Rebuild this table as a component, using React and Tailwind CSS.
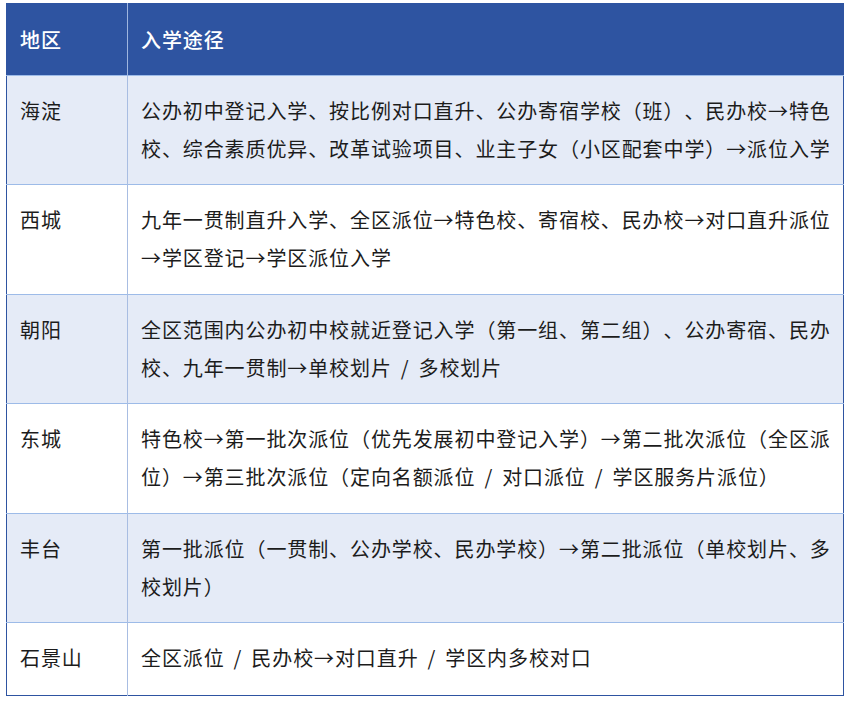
import React from "react";

const Sl = () => <span className="mx-[9px]">/</span>;
const rows = [
  { d: "海淀", lines: ["公办初中登记入学、按比例对口直升、公办寄宿学校（班）、民办校→特色", "校、综合素质优异、改革试验项目、业主子女（小区配套中学）→派位入学"] },
  { d: "西城", lines: ["九年一贯制直升入学、全区派位→特色校、寄宿校、民办校→对口直升派位", "→学区登记→学区派位入学"] },
  { d: "朝阳", lines: ["全区范围内公办初中校就近登记入学（第一组、第二组）、公办寄宿、民办", <>校、九年一贯制→单校划片<Sl />多校划片</>] },
  { d: "东城", lines: ["特色校→第一批次派位（优先发展初中登记入学）→第二批次派位（全区派", <>位）→第三批次派位（定向名额派位<Sl />对口派位<Sl />学区服务片派位）</>] },
  { d: "丰台", lines: ["第一批派位（一贯制、公办学校、民办学校）→第二批派位（单校划片、多", "校划片）"] },
  { d: "石景山", lines: [<>全区派位<Sl />民办校→对口直升<Sl />学区内多校对口</>] },
];

export default function App() {
  return (
    <div className="w-[850px] h-[702px] bg-white pt-[3px] pl-[6px]" style={{ fontFamily: '"Noto Sans CJK SC", "Noto Sans", sans-serif' }}>
      <table className="w-[838px] border-collapse border border-[#2e54a1] text-[20px] tracking-[0.9px] text-[#1c1c1c] [text-spacing-trim:space-all]">
        <colgroup>
          <col className="w-[121px]" />
          <col />
        </colgroup>
        <thead>
          <tr className="h-[72px] bg-[#2e54a1] text-white">
            <th className="border-r border-[#9fb6df] pl-[13px] text-left font-medium align-middle">地区</th>
            <th className="pl-[13px] text-left font-medium align-middle">入学途径</th>
          </tr>
        </thead>
        <tbody>
          {rows.map((r, i) => (
            <tr key={i} className={`${i % 2 === 0 ? "bg-[#e5ebf7]" : "bg-white"} border-t border-[#9dbbe8]`}>
              <td className={`${r.lines.length > 1 ? (i === 0 ? "h-[109px]" : "h-[109.5px]") : "h-[73px]"} border-r border-[#a8bde2] pl-[13px] align-top pt-[16px] leading-[38px]`}>
                {r.d}
              </td>
              <td className="pl-[13px] align-top pt-[16px] leading-[38px] whitespace-nowrap">
                {r.lines.map((l, j) => (
                  <div key={j}>{l}</div>
                ))}
              </td>
            </tr>
          ))}
        </tbody>
      </table>
    </div>
  );
}
